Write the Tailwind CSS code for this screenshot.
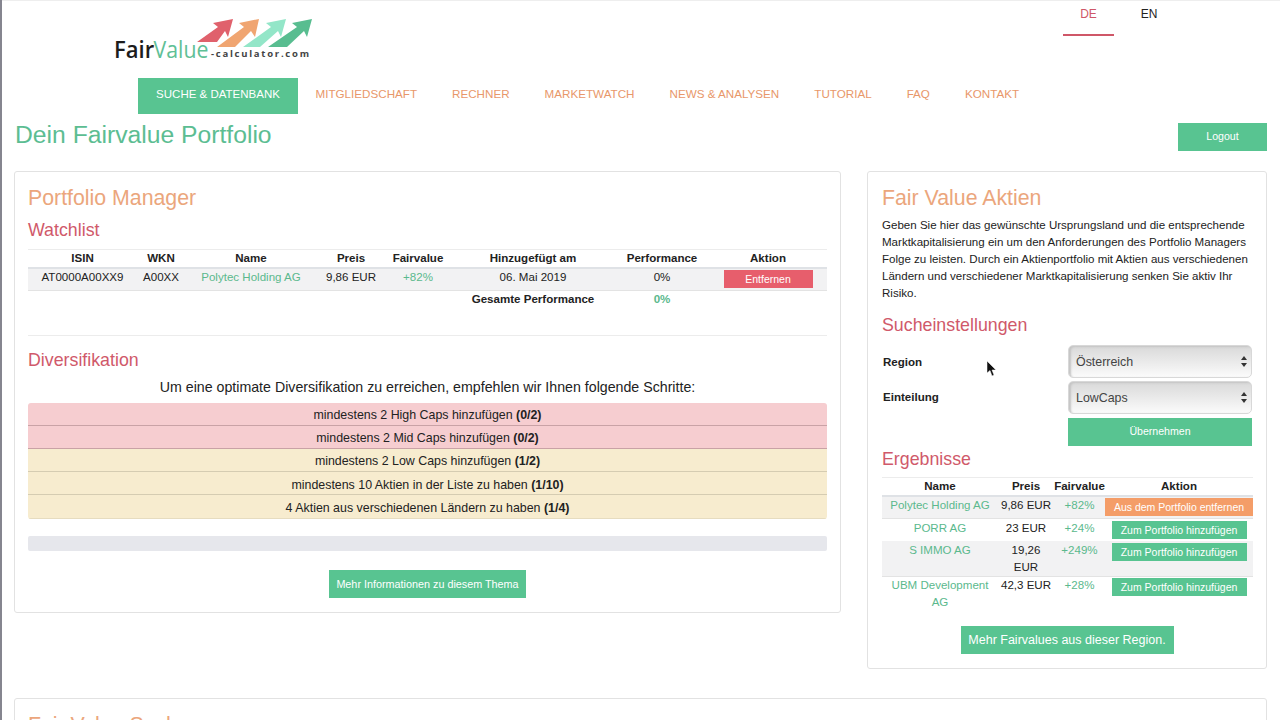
<!DOCTYPE html>
<html lang="de">
<head>
    <meta charset="UTF-8">
    <title>Dein Fairvalue Portfolio</title>
    <script src="https://cdn.jsdelivr.net/npm/@tailwindcss/browser@4"></script>
</head>
<body class="relative h-[720px] overflow-hidden bg-white border-l-2 border-[#85858f] shadow-[inset_0_1px_0_#eeeeee] pl-[12px] pr-[13px] font-['Liberation_Sans',Arial,sans-serif] text-[11.55px] text-[#222]">

    <!-- Logo + language -->
    <div class="flex justify-between h-[78px]">
        <svg class="ml-[99px] mt-[15px]" width="202" height="50" viewBox="113 15 202 50" xmlns="http://www.w3.org/2000/svg">
            <polygon points="197,42 217,42 225,31 228,37 233,19 213,23 218,27" fill="#e0616c"/>
            <polygon points="217,47 235,47 251,31 255,37 259,19 239,23 244,27" fill="#f0a571"/>
            <polygon points="243,47 260,47 278,31 281,37 286,19 266,23 271,27" fill="#93e6c8"/>
            <polygon points="268,47 287,47 304,31 307,37 312,19 292,23 297,27" fill="#58bd90"/>
            <text transform="translate(114 58) scale(.92 1)" font-family="Open Sans" font-size="24" font-weight="600" fill="#1c1c1c">Fair</text>
            <text transform="translate(153.5 58) scale(.887 1)" font-family="Open Sans" font-size="24" fill="#5fc096">Value</text>
            <text x="211" y="57" font-family="Open Sans" font-size="9.5" font-weight="700" letter-spacing="1.75" fill="#444">-calculator.com</text>
        </svg>
        <div class="flex gap-[10px] mr-[93px] text-[12px]">
            <a class="w-[51px] h-[36px] pt-[5px] text-center text-[#cf5768] border-b-2 border-[#cf5768]">DE</a>
            <a class="w-[50px] h-[36px] pt-[5px] text-center text-[#222]">EN</a>
        </div>
    </div>

    <!-- Main nav -->
    <nav class="flex ml-[124px] h-[36px] text-[11.65px] text-[#e8976a] leading-[32px]">
        <a class="w-[160px] text-center text-[11.5px] leading-[33px] bg-[#58c491] text-white">SUCHE &amp; DATENBANK</a>
        <a class="px-[17.5px]">MITGLIEDSCHAFT</a>
        <a class="px-[17.5px]">RECHNER</a>
        <a class="px-[17.5px]">MARKETWATCH</a>
        <a class="px-[17.5px]">NEWS &amp; ANALYSEN</a>
        <a class="px-[17.5px]">TUTORIAL</a>
        <a class="px-[17.5px]">FAQ</a>
        <a class="px-[17.5px]">KONTAKT</a>
    </nav>

    <div class="flex justify-between items-start h-[57px]">
        <h1 class="text-[24.7px] leading-[30px] mt-[6px] ml-[1px] text-[#5cbd92]">Dein Fairvalue Portfolio</h1>
        <button class="w-[89px] h-[28px] mt-[9px] bg-[#58c491] text-white text-[10.6px]">Logout</button>
    </div>

    <div class="flex items-start gap-[26px]">
        <!-- Portfolio manager -->
        <section class="w-[827px] h-[442px] border border-[#e2e2e2] rounded-[3px] px-[13px] pt-[12px]">
            <h2 class="text-[21.3px] leading-[28px] text-[#eba67c]">Portfolio Manager</h2>
            <h3 class="text-[17.8px] leading-[20px] mt-[8px] text-[#d0596a]">Watchlist</h3>
            <table class="table-fixed w-[799px] mt-[9px] text-center border-collapse">
                <colgroup>
                    <col class="w-[109px]"><col class="w-[48px]"><col class="w-[132px]"><col class="w-[68px]"><col class="w-[66px]"><col class="w-[164px]"><col class="w-[94px]"><col class="w-[118px]">
                </colgroup>
                <thead>
                    <tr class="h-[18px] border-t border-b-2 border-t-[#ececec] border-b-[#dfe2e6] font-bold">
                        <td>ISIN</td><td>WKN</td><td>Name</td><td>Preis</td><td>Fairvalue</td><td>Hinzugefügt am</td><td>Performance</td><td>Aktion</td>
                    </tr>
                </thead>
                <tbody>
                    <tr class="h-[22px] bg-[#f2f2f3] border-b border-[#e3e3e3]">
                        <td class="align-top">AT0000A00XX9</td>
                        <td class="align-top">A00XX</td>
                        <td class="align-top text-[#5bb98d]">Polytec Holding AG</td>
                        <td class="align-top">9,86 EUR</td>
                        <td class="align-top text-[#5bb98d]">+82%</td>
                        <td class="align-top">06. Mai 2019</td>
                        <td class="align-top">0%</td>
                        <td class="align-top pt-[1px]"><button class="w-[89px] h-[18px] bg-[#e75e6c] text-white text-[10.5px] leading-[18px] block mx-auto">Entfernen</button></td>
                    </tr>
                    <tr class="h-[19px] font-bold">
                        <td colspan="5"></td>
                        <td>Gesamte Performance</td>
                        <td class="text-[#5bb98d]">0%</td>
                        <td></td>
                    </tr>
                </tbody>
            </table>
            <hr class="mt-[26px] border-[#ececec]">
            <h3 class="text-[17.8px] leading-[20px] mt-[14px] text-[#d0596a]">Diversifikation</h3>
            <p class="text-[14.2px] leading-[20px] mt-[7px] text-center">Um eine optimate Diversifikation zu erreichen, empfehlen wir Ihnen folgende Schritte:</p>
            <ul class="mt-[6px] rounded-[3px] overflow-hidden text-center text-[12.4px] leading-[22px]">
                <li class="h-[23px] pt-[1px] bg-[#f6cdd0] border-b border-[#c9a2a6]">mindestens 2 High Caps hinzufügen <b>(0/2)</b></li>
                <li class="h-[23px] pt-[1px] bg-[#f6cdd0] border-b border-[#c9a2a6]">mindestens 2 Mid Caps hinzufügen <b>(0/2)</b></li>
                <li class="h-[23px] pt-[1px] bg-[#f7eccf] border-b border-[#d5ccb2]">mindestens 2 Low Caps hinzufügen <b>(1/2)</b></li>
                <li class="h-[23px] pt-[2px] bg-[#f7eccf] border-b border-[#d5ccb2]">mindestens 10 Aktien in der Liste zu haben <b>(1/10)</b></li>
                <li class="h-[24px] pt-[2px] bg-[#f7eccf] border-b border-[#e6dcc0]">4 Aktien aus verschiedenen Ländern zu haben <b>(1/4)</b></li>
            </ul>
            <div class="h-[15px] mt-[17px] bg-[#e6e7ec] rounded-[2px]"></div>
            <div class="flex justify-center mt-[19px]">
                <button class="w-[197px] h-[28px] bg-[#58c491] text-white text-[10.8px]">Mehr Informationen zu diesem Thema</button>
            </div>
        </section>

        <!-- Fair value aktien -->
        <section class="w-[400px] h-[498px] border border-[#e2e2e2] rounded-[3px] px-[14px] pt-[12px]">
            <h2 class="text-[21.3px] leading-[28px] text-[#eba67c]">Fair Value Aktien</h2>
            <p class="mt-[5px] leading-[17px] whitespace-nowrap">Geben Sie hier das gewünschte Ursprungsland und die entsprechende<br>Marktkapitalisierung ein um den Anforderungen des Portfolio Managers<br>Folge zu leisten. Durch ein Aktienportfolio mit Aktien aus verschiedenen<br>Ländern und verschiedener Marktkapitalisierung senken Sie aktiv Ihr<br>Risiko.</p>
            <h3 class="text-[17.8px] leading-[20px] mt-[13px] text-[#d0596a]">Sucheinstellungen</h3>
            <div class="mt-[10px] flex items-center justify-between h-[33px]">
                <label class="font-bold pl-[1px] pt-[2px]">Region</label>
                <div class="relative w-[184px] h-[33px] rounded-[5px] border border-[#d8d8d8] bg-gradient-to-b from-[#d9d9d9] to-[#fbfbfb] shadow-[inset_2px_1px_2px_#c4c4c4] pl-[7px] text-[12.4px] leading-[32px] text-[#444]">
                    Österreich
                    <svg class="absolute right-[4px] top-[10px]" width="6" height="11" viewBox="0 0 6 11"><path d="M3 0L6 4H0zM3 11L0 7h6z" fill="#333"/></svg>
                </div>
            </div>
            <div class="mt-[3px] flex items-center justify-between h-[33px]">
                <label class="font-bold pl-[1px]">Einteilung</label>
                <div class="relative w-[184px] h-[33px] rounded-[5px] border border-[#d8d8d8] bg-gradient-to-b from-[#d9d9d9] to-[#fbfbfb] shadow-[inset_2px_1px_2px_#c4c4c4] pl-[7px] text-[12.4px] leading-[32px] text-[#444]">
                    LowCaps
                    <svg class="absolute right-[4px] top-[10px]" width="6" height="11" viewBox="0 0 6 11"><path d="M3 0L6 4H0zM3 11L0 7h6z" fill="#333"/></svg>
                </div>
            </div>
            <div class="flex justify-end mt-[4px]">
                <button class="w-[184px] h-[28px] bg-[#58c491] text-white text-[10.6px]">Übernehmen</button>
            </div>
            <h3 class="text-[17.8px] leading-[20px] mt-[3px] text-[#d0596a]">Ergebnisse</h3>
            <table class="table-fixed w-[371px] mt-[8px] text-center border-collapse">
                <colgroup>
                    <col class="w-[116px]"><col class="w-[56px]"><col class="w-[51px]"><col class="w-[148px]">
                </colgroup>
                <thead>
                    <tr class="h-[18px] border-t border-b-2 border-t-[#ececec] border-b-[#dfe2e6] font-bold leading-[15px]">
                        <td class="pt-[1px]">Name</td><td class="pt-[1px]">Preis</td><td class="pt-[1px]">Fairvalue</td><td class="pt-[1px]">Aktion</td>
                    </tr>
                </thead>
                <tbody class="leading-[17px]">
                    <tr class="h-[23px] bg-[#f2f2f3] border-b border-[#e3e3e3]">
                        <td class="align-top text-[#5bb98d]">Polytec Holding AG</td>
                        <td class="align-top">9,86 EUR</td>
                        <td class="align-top text-[#5bb98d]">+82%</td>
                        <td class="align-top pt-[1px]"><button class="w-[148px] h-[18px] block bg-[#f49d68] text-white text-[10.5px] leading-[18px]">Aus dem Portfolio entfernen</button></td>
                    </tr>
                    <tr class="h-[22px]">
                        <td class="align-top pt-[1px] text-[#5bb98d]">PORR AG</td>
                        <td class="align-top pt-[1px]">23 EUR</td>
                        <td class="align-top pt-[1px] text-[#5bb98d]">+24%</td>
                        <td class="align-top pt-[2px]"><button class="w-[135px] h-[18px] block mx-auto bg-[#58c491] text-white text-[10.5px] leading-[18px]">Zum Portfolio hinzufügen</button></td>
                    </tr>
                    <tr class="h-[35px] bg-[#f2f2f3] border-b border-[#e3e3e3]">
                        <td class="align-top pt-[1px] text-[#5bb98d]">S IMMO AG</td>
                        <td class="align-top pt-[1px]">19,26 EUR</td>
                        <td class="align-top pt-[1px] text-[#5bb98d]">+249%</td>
                        <td class="align-top pt-[2px]"><button class="w-[135px] h-[18px] block mx-auto bg-[#58c491] text-white text-[10.5px] leading-[18px]">Zum Portfolio hinzufügen</button></td>
                    </tr>
                    <tr class="h-[35px]">
                        <td class="align-top px-[5px] text-[#5bb98d]">UBM Development AG</td>
                        <td class="align-top">42,3 EUR</td>
                        <td class="align-top text-[#5bb98d]">+28%</td>
                        <td class="align-top pt-[1px]"><button class="w-[135px] h-[18px] block mx-auto bg-[#58c491] text-white text-[10.5px] leading-[18px]">Zum Portfolio hinzufügen</button></td>
                    </tr>
                </tbody>
            </table>
            <div class="flex justify-center mt-[15px]">
                <button class="w-[213px] h-[28px] bg-[#58c491] text-white text-[12.5px]">Mehr Fairvalues aus dieser Region.</button>
            </div>
        </section>
    </div>

    <!-- Fair value suche (cut off by the window) -->
    <section class="mt-[29px] h-[200px] border border-[#e2e2e2] rounded-[3px] px-[13px] pt-[12px]">
        <h2 class="text-[21.3px] leading-[28px] text-[#eba67c]">Fair Value Suche</h2>
    </section>

    <!-- mouse pointer -->
    <svg class="absolute left-[984px] top-[361px]" width="11" height="16" viewBox="0 0 11 16"><path d="M1 0v12l3-2.5L6 15l2-1-2-5h4z" fill="#111" stroke="#fff" stroke-width=".5"/></svg>
</body>
</html>
